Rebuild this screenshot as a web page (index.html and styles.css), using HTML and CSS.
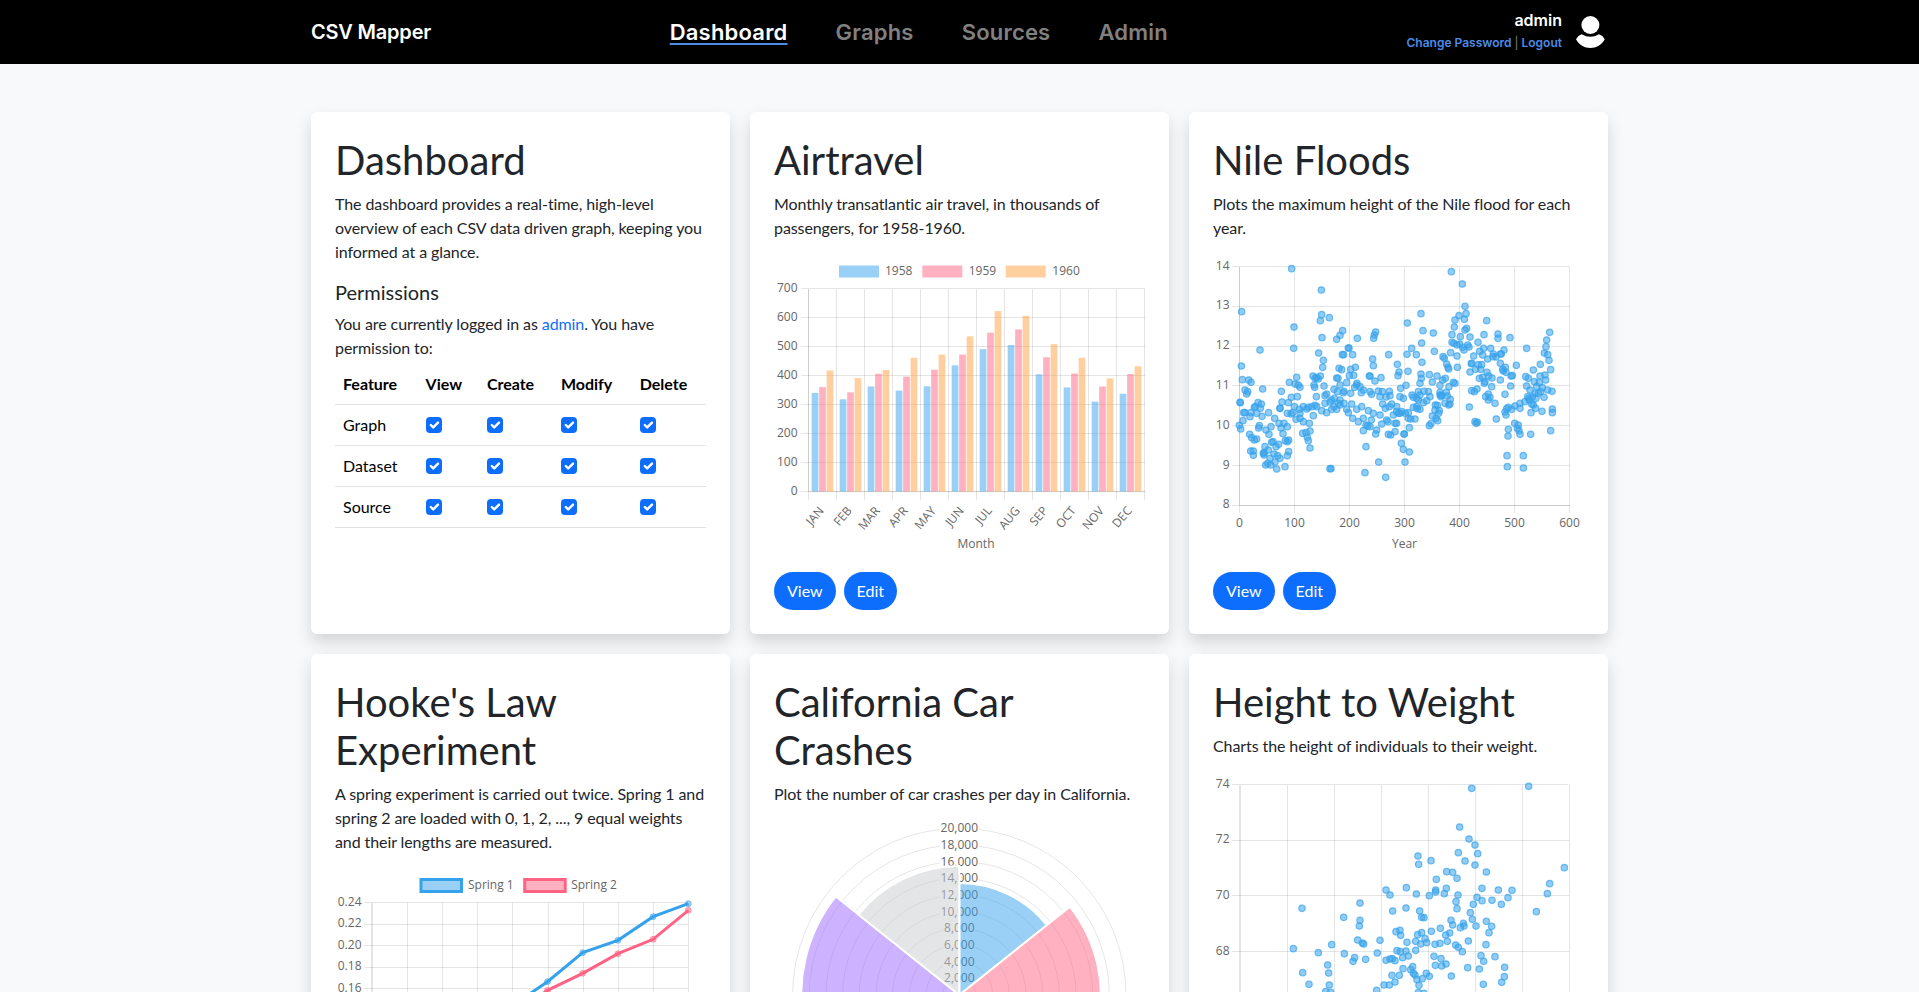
FILE: index.html
```html
<!DOCTYPE html>
<html lang="en">
<head>
<meta charset="utf-8">
<title>CSV Mapper</title>
<link rel="stylesheet" href="styles.css">
</head>
<body>

<nav class="navbar">
  <div class="container navbar-inner">
    <a class="brand" href="#">CSV Mapper</a>
    <div class="nav-links">
      <a class="nav-link active" href="#">Dashboard</a>
      <a class="nav-link" href="#">Graphs</a>
      <a class="nav-link" href="#">Sources</a>
      <a class="nav-link" href="#">Admin</a>
    </div>
    <div class="user">
      <div class="user-text">
        <div class="user-name">admin</div>
        <div class="user-links"><a href="#">Change Password</a><span class="sep">|</span><a href="#">Logout</a></div>
      </div>
      <svg class="avatar" viewBox="0 0 29 32" width="29" height="32">
        <circle cx="14.4" cy="9" r="9"/>
        <path d="M0 23.3Q2 19.4 5.7 18.3Q14.4 23.4 23 18.3Q26.8 19.4 28.7 23.3C26 29 20 32 14.4 32C8.5 32 3 29 0 23.3Z"/>
      </svg>
    </div>
  </div>
</nav>

<main class="container cards">

  <section class="card">
    <h1>Dashboard</h1>
    <p>The dashboard provides a real-time, high-level overview of each CSV data driven graph, keeping you informed at a glance.</p>
    <h2>Permissions</h2>
    <p class="tight">You are currently logged in as <a href="#">admin</a>. You have permission to:</p>
    <table class="perms">
      <thead>
        <tr><th>Feature</th><th>View</th><th>Create</th><th>Modify</th><th>Delete</th></tr>
      </thead>
      <tbody>
        <tr>
          <td>Graph</td>
          <td><input type="checkbox" checked></td>
          <td><input type="checkbox" checked></td>
          <td><input type="checkbox" checked></td>
          <td><input type="checkbox" checked></td>
        </tr>
        <tr>
          <td>Dataset</td>
          <td><input type="checkbox" checked></td>
          <td><input type="checkbox" checked></td>
          <td><input type="checkbox" checked></td>
          <td><input type="checkbox" checked></td>
        </tr>
        <tr>
          <td>Source</td>
          <td><input type="checkbox" checked></td>
          <td><input type="checkbox" checked></td>
          <td><input type="checkbox" checked></td>
          <td><input type="checkbox" checked></td>
        </tr>
      </tbody>
    </table>
  </section>

  <section class="card">
    <h1>Airtravel</h1>
    <p>Monthly transatlantic air travel, in thousands of passengers, for 1958-1960.</p>
    <svg class="chart" id="chart-air"></svg>
    <div class="actions"><a class="btn" href="#">View</a><a class="btn" href="#">Edit</a></div>
  </section>

  <section class="card">
    <h1>Nile Floods</h1>
    <p>Plots the maximum height of the Nile flood for each year.</p>
    <svg class="chart" id="chart-nile"></svg>
    <div class="actions"><a class="btn" href="#">View</a><a class="btn" href="#">Edit</a></div>
  </section>

  <section class="card">
    <h1>Hooke's Law Experiment</h1>
    <p>A spring experiment is carried out twice. Spring 1 and spring 2 are loaded with 0, 1, 2, ..., 9 equal weights and their lengths are measured.</p>
    <svg class="chart" id="chart-hooke"></svg>
    <div class="actions"><a class="btn" href="#">View</a><a class="btn" href="#">Edit</a></div>
  </section>

  <section class="card">
    <h1>California Car Crashes</h1>
    <p>Plot the number of car crashes per day in California.</p>
    <svg class="chart" id="chart-crashes"></svg>
    <div class="actions"><a class="btn" href="#">View</a><a class="btn" href="#">Edit</a></div>
  </section>

  <section class="card">
    <h1>Height to Weight</h1>
    <p>Charts the height of individuals to their weight.</p>
    <svg class="chart" id="chart-height"></svg>
    <div class="actions"><a class="btn" href="#">View</a><a class="btn" href="#">Edit</a></div>
  </section>

</main>

<script src="charts.js"></script>
</body>
</html>
```

FILE: styles.css
```css
html, body
  {
	height : 100%;
	overflow : hidden;
  }

body
  {
	margin : 0;
	background-color : #f8f9fa;
	color : #212529;
	font-family : "Lato", "Liberation Sans", sans-serif;
	font-size : 16px;
	line-height : 24px;
  }

a
  {
	color : #0d6efd;
	text-decoration : none;
  }

.container
  {
	width : 1296px;
	margin : 0 auto;
	padding-right : 1px;
  }

/* top bar */
.navbar
  {
	background-color : #000;
	height : 64px;
  }
.navbar-inner
  {
	display : flex;
	align-items : center;
	justify-content : space-between;
	height : 100%;
	font-family : "Inter", "Liberation Sans", sans-serif;
  }
.brand
  {
	color : #fff;
	font-size : 20px;
	font-weight : 600;
	letter-spacing : -0.2px;
  }
.nav-links
  {
	display : flex;
	gap : 48px;
  }
.nav-link
  {
	color : #808080;
	font-size : 22px;
	font-weight : 600;
	letter-spacing : 0.2px;
  }
.nav-link.active
  {
	color : #fff;
	text-decoration : underline;
	text-decoration-color : #4c8be8;
	text-decoration-thickness : 2px;
	text-underline-offset : 3px;
  }
.user
  {
	display : flex;
	align-items : center;
	gap : 14px;
	padding-right : 2px;
  }
.user-text
  {
	text-align : right;
	padding-bottom : 3px;
  }
.user-name
  {
	color : #fff;
	font-size : 16px;
	font-weight : 600;
	line-height : 24px;
  }
.user-links
  {
	font-size : 12px;
	font-weight : 600;
	line-height : 21px;
  }
.user-links a
  {
	color : #4c8be8;
  }
.sep
  {
	color : #808080;
	font-weight : 400;
	margin : 0 3px;
  }
.avatar
  {
	fill : #fff;
  }

/* cards */
.cards
  {
	display : grid;
	grid-template-columns : repeat(3, 1fr);
	gap : 20px;
	padding-top : 48px;
  }
.card
  {
	display : flex;
	flex-direction : column;
	background-color : #fff;
	border-radius : 6px;
	box-shadow : 0 8px 16px rgba(0, 0, 0, 0.15);
	padding : 24px;
  }
.card h1
  {
	margin : 0 0 8px;
	font-size : 40px;
	font-weight : 400;
	line-height : 48px;
  }
.card h2
  {
	margin : 0 0 8px;
	font-size : 20px;
	font-weight : 400;
	line-height : 24px;
  }
.card p
  {
	margin : 0 0 16px;
	letter-spacing : -0.09px;
  }
.card p.tight
  {
	margin-bottom : 4px;
  }

/* permissions table */
.perms
  {
	width : 100%;
	border-collapse : collapse;
  }
.perms th
  {
	padding : 8px;
	text-align : left;
	font-weight : 700;
	color : #000;
	border-bottom : 1px solid #dee2e6;
  }
.perms td
  {
	padding : 8px;
	color : #000;
	border-bottom : 1px solid #dee2e6;
  }
.perms input
  {
	appearance : none;
	display : block;
	width : 16px;
	height : 16px;
	margin : 0;
	border-radius : 4px;
	background : #0d6efd url("data:image/svg+xml,%3csvg xmlns='http://www.w3.org/2000/svg' viewBox='0 0 20 20'%3e%3cpath fill='none' stroke='%23fff' stroke-linecap='round' stroke-linejoin='round' stroke-width='3' d='m6 10 3 3 6-6'/%3e%3c/svg%3e") center / 100% no-repeat;
  }

/* charts */
.chart
  {
	display : block;
	flex : none;
	width : 371px;
	height : 300px;
	margin-bottom : 16px;
  }
.chart text
  {
	font-family : "Open Sans", "Liberation Sans", sans-serif;
	font-size : 12px;
	fill : #666;
  }
.grid
  {
	stroke : rgba(0, 0, 0, 0.1);
	stroke-width : 1;
	shape-rendering : crispEdges;
	fill : none;
  }

.actions
  {
	display : flex;
	gap : 8px;
	margin-top : auto;
  }
.btn
  {
	background-color : #0d6efd;
	color : #fff;
	border-radius : 19px;
	padding : 7px 13px;
  }
```

FILE: charts.js
```js
// hand-rolled charts, drawn as svg in the chart areas of the cards

var BLUE = "#36a2eb", PINK = "#ff6384", ORANGE = "#ff9f40";
var BLUE_FILL = "rgba(54,162,235,0.5)", PINK_FILL = "rgba(255,99,132,0.5)", ORANGE_FILL = "rgba(255,159,64,0.5)";

function el(parent, tag, attrs, content)
  {
    var node = document.createElementNS("http://www.w3.org/2000/svg", tag);
    for (var key in attrs)
      {
        node.setAttribute(key, attrs[key]);
      } /*for*/
    if (content !== undefined)
      {
        node.textContent = content;
      } /*if*/
    parent.appendChild(node);
    return node;
  } /*el*/

function hline(svg, x1, x2, y)
  {
    el(svg, "line", {x1 : x1, x2 : x2, y1 : y, y2 : y, "class" : "grid"});
  } /*hline*/

function vline(svg, x, y1, y2)
  {
    el(svg, "line", {x1 : x, x2 : x, y1 : y1, y2 : y2, "class" : "grid"});
  } /*vline*/

function label(svg, x, y, anchor, text)
  {
    return el(svg, "text", {x : x, y : y + 3, "text-anchor" : anchor}, text);
  } /*label*/

function scatter(svg, points, dx, dy)
  {
    // points are traced at 3x the chart scale
    for (var i = 0; i < points.length; i += 2)
      {
        el(svg, "circle",
          {
            cx : points[i] / 3 + dx,
            cy : points[i + 1] / 3 + dy,
            r : 3.2,
            fill : "rgba(54,162,235,0.55)",
            stroke : "rgba(54,162,235,0.7)",
            "stroke-width" : 1.2,
          });
      } /*for*/
  } /*scatter*/

/* Airtravel */
(function ()
  {
    var svg = document.getElementById("chart-air");
    var months = ["JAN", "FEB", "MAR", "APR", "MAY", "JUN", "JUL", "AUG", "SEP", "OCT", "NOV", "DEC"];
    var series =
      [
        {fill : BLUE_FILL, data : [340, 318, 362, 348, 363, 435, 491, 505, 404, 359, 310, 337]},
        {fill : PINK_FILL, data : [360, 342, 406, 396, 420, 472, 548, 559, 463, 407, 362, 405]},
        {fill : ORANGE_FILL, data : [417, 391, 419, 461, 472, 535, 622, 606, 508, 461, 390, 432]},
      ];
    var left = 34.5, top = 32.5, step = 29, cat = 28;
    var legend = [[65, 111, "1958"], [148.3, 194.7, "1959"], [231.7, 278.3, "1960"]];
    legend.forEach(function (item, i)
      {
        el(svg, "rect", {x : item[0], y : 9.5, width : 40, height : 12, fill : series[i].fill});
        label(svg, item[1], 16, "start", item[2]);
      });
    for (var i = 0; i <= 7; ++i)
      {
        hline(svg, left - 8, left + 12 * cat, top + i * step);
        label(svg, left - 11, top + i * step, "end", String(700 - i * 100));
      } /*for*/
    hline(svg, left, left + 12 * cat, top + 7 * step);
    for (var i = 0; i <= 12; ++i)
      {
        vline(svg, left + i * cat, top, top + 7 * step + 8);
      } /*for*/
    vline(svg, left, top, top + 7 * step);
    for (var i = 0; i < 12; ++i)
      {
        series.forEach(function (s, j)
          {
            var h = s.data[i] * 7 * step / 700;
            el(svg, "rect",
              {
                x : left + i * cat + 2.8 + j * 7.47 + 0.37,
                y : top + 7 * step - h,
                width : 6.72,
                height : h,
                fill : s.fill,
              });
          });
        el(svg, "text",
          {
            "text-anchor" : "end",
            transform : "translate(" + (left + i * cat + 16) + ",255) rotate(-50)",
          }, months[i]);
      } /*for*/
    label(svg, 202, 289, "middle", "Month");
  })();

/* Nile Floods */
(function ()
  {
    var svg = document.getElementById("chart-nile");
    var left = 26.5, top = 10.5, ystep = 39.83, xstep = 55;
    for (var i = 0; i <= 6; ++i)
      {
        hline(svg, left - 8, left + 6 * xstep, top + i * ystep);
        label(svg, left - 10, top + i * ystep, "end", String(14 - i));
        vline(svg, left + i * xstep, top, top + 6 * ystep + 8);
        label(svg, left + i * xstep, 268, "middle", String(i * 100));
      } /*for*/
    vline(svg, left, top, top + 6 * ystep);
    hline(svg, left, left + 6 * xstep, top + 6 * ystep);
    label(svg, 191.5, 289, "middle", "Year");
    scatter(svg,
      [
        275,56, 754,65, 787,102, 364,120, 125,185, 795,169, 663,191, 798,191, 777,197, 365,194,
        361,212, 388,203, 860,212, 622,219, 793,208, 765,210, 282,231, 763,231, 800,235, 795,240,
        669,242, 527,246, 700,249, 428,242, 420,256, 852,254, 756,254, 894,252, 781,260, 523,255,
        930,263, 1049,247, 1040,270, 521,265, 366,263, 472,265, 410,268, 894,265, 810,261, 665,279,
        756,277, 762,280, 771,285, 779,282, 788,292, 803,285, 807,291, 281,295, 180,300, 445,294,
        447,294, 635,295, 752,308, 703,304, 834,277, 851,295, 872,295, 912,300, 980,295, 1038,290,
        356,309, 427,314, 431,314, 458,314, 566,314, 621,313, 649,314, 771,318, 821,318, 848,315,
        880,312, 904,312, 839,304, 863,327, 879,320, 901,312, 888,321, 1033,309, 1043,314, 1047,331,
        370,331, 518,327, 666,337, 729,320, 733,325, 740,342, 901,340, 124,348, 368,352, 417,355,
        425,359, 466,352, 452,358, 520,347, 592,343, 744,352, 746,357, 772,352, 814,341, 835,344,
        845,344, 916,352, 810,366, 842,358, 827,358, 861,367, 908,358, 949,346, 910,363, 918,367,
        1021,343, 1052,359, 597,366, 624,364, 663,372, 594,377, 688,374, 711,378, 1000,360, 977,380,
        448,377, 461,376, 339,378, 361,378, 350,383, 355,387, 410,384, 414,385, 510,378, 508,378,
        543,383, 290,382, 127,389, 146,390, 153,397, 268,397, 345,385, 664,385, 285,402, 295,405,
        300,412, 470,405, 471,400, 525,393, 440,398, 660,400, 618,406, 697,396, 760,397, 728,390,
        736,385, 848,382, 866,378, 876,384, 933,378, 937,377, 901,390, 1020,378, 1035,375, 1037,390,
        985,385, 1003,395, 1018,398, 1010,410, 980,408, 932,408, 188,417, 135,420, 143,425, 140,432,
        244,424, 344,412, 372,408, 402,418, 412,425, 430,428, 464,412, 480,410, 490,420, 484,428,
        535,423, 547,425, 568,424, 602,415, 720,406, 747,410, 815,422, 823,425, 831,417, 853,400,
        1027,413, 1043,420, 1056,424, 121,458, 131,488, 174,458, 184,462, 166,470, 181,475, 274,442,
        292,440, 349,440, 375,437, 403,445, 420,450, 395,450, 432,424, 515,433, 570,437, 558,441,
        600,440, 636,435, 640,442, 655,425, 672,424, 685,425, 720,427, 739,427, 865,432, 870,442,
        915,433, 1015,430, 1032,442, 988,450, 997,441, 751,448, 750,462, 129,512, 118,526, 122,537,
        135,488, 153,488, 163,472, 186,499, 206,488, 224,505, 240,475, 240,475, 265,458, 273,492,
        278,488, 246,456, 178,527, 176,534, 149,553, 155,563, 163,570, 170,567, 152,603, 160,603,
        160,616, 207,553, 213,530, 237,520, 243,534, 252,520, 262,530, 249,551, 236,583, 215,577,
        219,575, 195,590, 192,608, 222,612, 266,605, 262,617, 233,617, 192,615, 190,610, 197,645,
        203,640, 212,645, 225,636, 230,657, 255,650, 256,572, 262,575, 266,570, 330,594, 325,572,
        322,562, 330,543, 308,550, 318,548, 310,515, 300,505, 320,477, 335,470, 345,466, 340,497,
        328,520, 288,508, 380,432, 375,460, 380,488, 402,470, 410,478, 390,456, 432,460, 455,462,
        440,478, 458,505, 475,515, 490,505, 498,525, 503,528, 514,510, 510,530, 490,542, 527,552,
        530,540, 540,495, 545,522, 560,510, 564,515, 572,555, 565,553, 556,475, 575,462, 580,495,
        590,485, 585,520, 590,520, 585,545, 612,552, 613,552, 604,580, 610,598, 628,606, 615,636,
        498,590, 536,636, 495,668, 557,682, 390,656, 393,656, 616,490, 628,533, 625,488, 600,490,
        625,505, 632,507, 645,507, 652,476, 650,445, 655,450, 670,458, 680,452, 688,527, 693,521,
        697,498, 706,465, 712,466, 708,505, 713,512, 716,490, 718,482, 720,435, 723,440, 742,438,
        944,520, 955,525, 952,535, 957,542, 960,553, 992,553, 925,538, 924,558, 921,617, 922,650,
        970,617, 970,654, 915,486, 918,495, 920,476, 925,472, 935,478, 945,468, 960,460, 975,455,
        983,440, 986,445, 1000,465, 1007,475, 993,488, 1026,484, 1052,542, 1057,477, 1057,488, 889,507,
        885,460, 857,440, 865,450, 832,517, 825,515, 829,520, 808,471, 746,465,
        // the thick band through the middle
        310,470, 325,472, 298,478, 283,470, 350,470, 365,482, 395,478, 420,465, 445,488, 470,478,
        485,470, 505,482, 520,490, 548,462, 590,470, 605,485, 640,472, 660,478, 690,440, 705,480,
        726,436, 735,460, 765,400, 792,300, 815,340, 838,385, 855,395, 875,410, 990,420, 1005,430,
        1022,425, 1008,445, 995,462, 960,475, 170,490, 150,500, 198,540, 228,590, 205,600, 210,625,
        240,625, 120,457, 300,490, 262,490, 420,405, 452,430, 510,425, 415,460, 342,405, 610,445,
        650,470, 660,435, 595,490, 568,470, 540,440,
      ], -13, -6);
  })();

/* Hooke's Law */
(function ()
  {
    var svg = document.getElementById("chart-hooke");
    var left = 36.5, top = 32.5, xstep = 35.2, ystep = 21.5;
    var series =
      [
        {line : BLUE, fill : BLUE_FILL, data : [255, 225, 195, 165, 135.7, 111.7, 82.7, 70.3, 46.7, 33.7]},
        {line : PINK, fill : PINK_FILL, data : [262, 235, 205, 175, 145, 120.3, 103.3, 83.7, 69.3, 40.3]},
      ];
    var legend = [[86, 133, "Spring 1"], [189.7, 236.2, "Spring 2"]];
    legend.forEach(function (item, i)
      {
        el(svg, "rect",
          {
            x : item[0],
            y : 9.5,
            width : 40.5,
            height : 12,
            fill : series[i].fill,
            stroke : series[i].line,
            "stroke-width" : 3,
          });
        label(svg, item[1], 15.7, "start", item[2]);
      });
    for (var i = 0; i <= 11; ++i)
      {
        hline(svg, left - 8, left + 9 * xstep, top + i * ystep);
        label(svg, left - 10, top + i * ystep, "end", (0.24 - i * 0.02).toFixed(2));
      } /*for*/
    for (var i = 0; i <= 9; ++i)
      {
        vline(svg, Math.round(left + i * xstep) + 0.5, top, 270);
      } /*for*/
    vline(svg, left, top, 270);
    series.forEach(function (s)
      {
        var points = s.data.map(function (y, i)
          {
            return (left + i * xstep) + "," + y;
          });
        el(svg, "polyline", {points : points.join(" "), fill : "none", stroke : s.line, "stroke-width" : 3});
        s.data.forEach(function (y, i)
          {
            el(svg, "circle",
              {
                cx : left + i * xstep,
                cy : y,
                r : 3,
                fill : s.fill,
                stroke : s.fill,
                "stroke-width" : 1,
              });
          });
      });
  })();

/* California Car Crashes */
(function ()
  {
    var svg = document.getElementById("chart-crashes");
    var cx = 185.3, cy = 173, ring = 16.67;
    for (var i = 1; i <= 10; ++i)
      {
        el(svg, "circle", {cx : cx, cy : cy, r : i * ring, fill : "none", stroke : "rgba(0,0,0,0.1)"});
      } /*for*/
    for (var i = 1; i <= 10; ++i)
      {
        var text = (i * 2).toString() + ",000";
        var w = i < 5 ? 32 : 39;
        el(svg, "rect", {x : cx - w / 2, y : cy - i * ring - 8, width : w, height : 16, fill : "#fff"});
        label(svg, cx, cy - i * ring + 1, "middle", text);
      } /*for*/
    var slices =
      [
        [112, BLUE_FILL],
        [141.5, PINK_FILL],
        [100, ORANGE_FILL],
        [120, "rgba(255,205,86,0.5)"],
        [110, "rgba(75,192,192,0.5)"],
        [158, "rgba(153,102,255,0.5)"],
        [129, "rgba(201,203,207,0.5)"],
      ];
    var sweep = 2 * Math.PI / slices.length;
    slices.forEach(function (slice, i)
      {
        var r = slice[0];
        var a1 = i * sweep, a2 = (i + 1) * sweep;
        var d =
            "M" + cx + " " + cy
            + "L" + (cx + r * Math.sin(a1)) + " " + (cy - r * Math.cos(a1))
            + "A" + r + " " + r + " 0 0 1 " + (cx + r * Math.sin(a2)) + " " + (cy - r * Math.cos(a2))
            + "Z";
        el(svg, "path", {d : d, fill : slice[1], stroke : "#fff", "stroke-width" : 2});
      });
  })();

/* Height to Weight */
(function ()
  {
    var svg = document.getElementById("chart-height");
    var left = 26.5, top = 10.5, ystep = 55.7, xstep = 47.14;
    for (var i = 0; i <= 4; ++i)
      {
        hline(svg, left - 8, left + 7 * xstep, top + i * ystep);
        label(svg, left - 10, top + i * ystep, "end", String(74 - 2 * i));
      } /*for*/
    for (var i = 0; i <= 7; ++i)
      {
        vline(svg, Math.round(left + i * xstep) + 0.5, top, top + 4 * ystep);
      } /*for*/
    vline(svg, left, top, top + 4 * ystep);
    scatter(svg,
      [
        815,85, 986,79, 779,201, 807,237, 825,255, 775,278, 833,281, 654,288, 693,302, 795,303,
        656,313, 825,315, 740,335, 758,337, 859,336, 771,355, 709,358, 707,390, 707,396, 739,385,
        733,401, 619,383, 558,390, 570,405, 649,402, 688,407, 774,405, 846,385, 895,390, 936,391,
        831,412, 846,422, 876,421, 924,413, 904,433, 820,433, 768,425, 771,446, 306,445, 480,429,
        578,453, 618,444, 659,453, 665,472, 672,473, 431,472, 480,481, 478,498, 753,481, 758,495,
        790,490, 792,498, 781,503, 828,498, 817,478, 811,458, 859,484, 875,499, 867,518, 721,505,
        694,514, 749,519, 737,525, 653,524, 665,518, 600,511, 602,526, 588,515, 540,541, 473,540,
        487,549, 491,552, 621,547, 647,544, 675,536, 680,548, 662,552, 705,553, 720,550, 742,544,
        767,555, 775,562, 787,575, 805,543, 858,554, 280,566, 395,554, 355,578, 433,581, 464,593,
        459,604, 497,598, 532,579, 558,601, 570,597, 577,596, 585,602, 608,593, 618,573, 591,572,
        601,575, 647,571, 625,588, 702,589, 723,596, 738,612, 725,618, 706,616, 843,587, 851,604,
        885,590, 803,623, 838,627, 914,622, 913,650, 905,667, 850,673, 308,638, 383,615, 386,639,
        327,673, 388,675, 377,695, 392,697, 530,691, 552,675, 568,675, 576,646, 585,666, 598,646,
        609,626, 632,629, 638,620, 640,640, 645,645, 651,659, 657,676, 667,656, 679,640, 688,649,
        754,648, 1009,455, 1042,401, 1049,371, 1093,323, 655,698, 672,700,
      ], -13, -14);
  })();
```
